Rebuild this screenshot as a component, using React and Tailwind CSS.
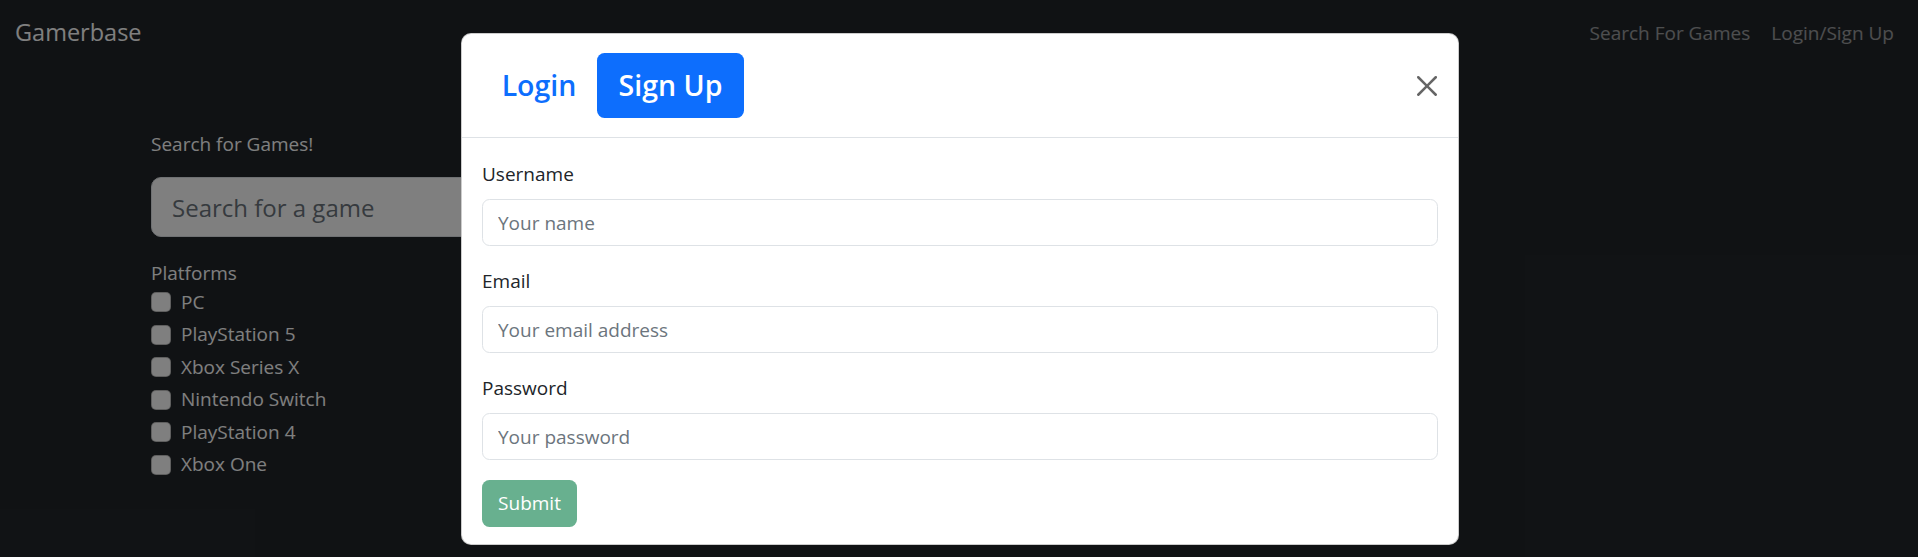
import { useState } from "react";

const platforms = [
  "PC",
  "PlayStation 5",
  "Xbox Series X",
  "Nintendo Switch",
  "PlayStation 4",
  "Xbox One",
];

function CloseIcon() {
  return (
    <svg viewBox="0 0 16 16" className="h-[20px] w-[20px] opacity-60" fill="#000">
      <path d="M.293.293a1 1 0 0 1 1.414 0L8 6.586 14.293.293a1 1 0 1 1 1.414 1.414L9.414 8l6.293 6.293a1 1 0 0 1-1.414 1.414L8 9.414l-6.293 6.293a1 1 0 0 1-1.414-1.414L6.586 8 .293 1.707a1 1 0 0 1 0-1.414z" />
    </svg>
  );
}

function Field({ label, type = "text", placeholder }) {
  return (
    <div className="mb-[20px]">
      <label className="mb-[10px] block text-[19px] leading-[30px] text-[#212529]">
        {label}
      </label>
      <input
        type={type}
        placeholder={placeholder}
        className="block h-[47px] w-full rounded-[7.5px] border border-[#dee2e6] bg-white px-[15px] text-[19px] text-[#212529] outline-none placeholder:text-[#6c757d]"
      />
    </div>
  );
}

function AuthModal() {
  const [tab, setTab] = useState("signup");

  return (
    <div className="absolute inset-0 flex justify-center pl-[2px] pt-[33px]">
      <div className="h-fit w-[998px] rounded-[10px] border border-black/20 bg-white">
        <header className="flex items-center border-b border-[#dee2e6] px-[20px] pb-[19px] pt-[19px]">
          <div className="flex gap-[1px]">
            <button
              type="button"
              onClick={() => setTab("login")}
              className={`h-[65px] w-[114px] rounded-[7.5px] text-[28.5px] font-semibold ${
                tab === "login" ? "bg-[#0d6efd] text-white" : "text-[#0d6efd]"
              }`}
            >
              Login
            </button>
            <button
              type="button"
              onClick={() => setTab("signup")}
              className={`h-[65px] w-[147px] rounded-[7.5px] text-[28.5px] font-semibold ${
                tab === "signup" ? "bg-[#0d6efd] text-white" : "text-[#0d6efd]"
              }`}
            >
              Sign Up
            </button>
          </div>
          <button type="button" className="ml-auto mr-[1px] flex h-[20px] w-[20px] items-center justify-center">
            <CloseIcon />
          </button>
        </header>

        <div className="px-[20px] pb-[17px] pt-[21px]">
          {tab === "signup" && <Field label="Username" placeholder="Your name" />}
          <Field label="Email" type="email" placeholder="Your email address" />
          <Field label="Password" type="password" placeholder="Your password" />
          <button
            type="button"
            disabled
            className="h-[47px] w-[95px] rounded-[7.5px] bg-[#198754] text-[19px] text-white opacity-65"
          >
            Submit
          </button>
        </div>
      </div>
    </div>
  );
}

export default function App() {
  return (
    <div className="relative h-[557px] w-full overflow-hidden bg-[#212529] font-['Open_Sans','Noto_Sans',sans-serif]">
      <nav className="flex h-[66px] items-center justify-between pl-[15px] pr-[24px]">
        <a className="text-[23.5px] text-white">Gamerbase</a>
        <div className="flex gap-[21px] text-[19px] text-white/55">
          <a>Search For Games</a>
          <a>Login/Sign Up</a>
        </div>
      </nav>

      <main className="pl-[151px] pt-[63px] text-white">
        <p className="mb-[18px] text-[19px] leading-[30px]">Search for Games!</p>
        <input
          type="text"
          placeholder="Search for a game"
          className="block h-[60px] w-[720px] rounded-[10px] border border-[#dee2e6] bg-white px-[20px] text-[24px] text-[#212529] outline-none placeholder:text-[#6c757d]"
        />
        <p className="mt-[22px] text-[19px] leading-[28px]">Platforms</p>
        <ul>
          {platforms.map((name) => (
            <li key={name} className="mb-[2.5px] flex h-[30px] items-center gap-[10px] text-[19px]">
              <span className="h-[20px] w-[20px] rounded-[5px] border border-black/25 bg-white" />
              {name}
            </li>
          ))}
        </ul>
      </main>

      <div className="absolute inset-0 bg-black/50" />
      <AuthModal />
    </div>
  );
}
